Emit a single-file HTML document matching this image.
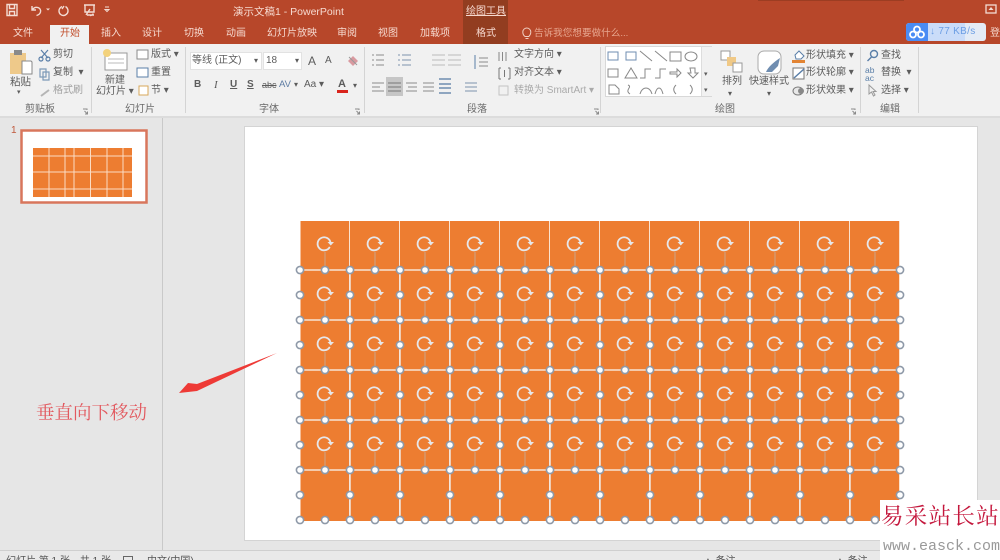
<!DOCTYPE html>
<html lang="zh"><head><meta charset="utf-8"><title>PowerPoint</title>
<style>
html,body{margin:0;padding:0;width:1000px;height:560px;overflow:hidden;background:#e6e6e6}
#p{position:absolute;left:0;top:0;width:1000px;height:560px;overflow:hidden;background:#e6e6e6;font-family:"Liberation Sans","Noto Sans CJK SC",sans-serif;color:#5c5c5c;font-size:10px;filter:blur(.35px)}
.t{position:absolute;white-space:nowrap;line-height:14px;height:14px;margin-top:2px}
.w{color:#f6d9cf}
.b{position:absolute}
svg{position:absolute;overflow:visible}
.sep{position:absolute;top:47px;width:1px;height:66px;background:#d4d4d4}
.lab{color:#6a6a6a}
</style></head><body><div id="p">
<div class="b" style="left:0;top:0;width:1000px;height:44px;background:#b7472a"></div>
<div class="b" style="left:463px;top:0;width:45px;height:44px;background:#923d20"></div>
<div class="b" style="left:758px;top:0;width:146px;height:1px;background:#9c3d22"></div>
<div class="b" style="left:50px;top:25px;width:39px;height:20px;background:#f1f1f1"></div>
<div class="b" style="left:0;top:44px;width:1000px;height:72px;background:#f1f1f1"></div>
<div class="b" style="left:0;top:116px;width:1000px;height:2px;background:#dcdcdc"></div>

<svg style="left:0;top:1px" width="130" height="24" fill="none" stroke="#f3dcd3" stroke-width="1.4">
<path d="M7 3.500h10v11H7zM9.500 3.500v4h5v-4M9.500 14.500v-4h5v4"/>
<path d="M32 5v4h4M32.500 8.500c3-4 9-2 8 2.500-.5 2-2 3-4 3.500"/><path d="M46 7.500h4l-2 2z" fill="#f3dcd3" stroke="none"/>
<path d="M64 5l-2 3M62 5.500c-2 1-3 2.500-3 4.500 0 3 2.500 4.500 4.500 4.500s4.500-2 4.500-4.500c0-2-1-3.500-2.500-4.500"/>
<path d="M84 4h11M85 4v7h9V4M90 8l-4 6M87 14h7M90 14.500c2 0 3-1 3-2"/>
<path d="M105 6h4M105 8.500h4l-2 2z" stroke-width="1"/>
</svg>

<div class="t w" style="left:233px;top:3px;font-size:10.500px">演示文稿1 - PowerPoint</div>
<div class="t w" style="left:466px;top:3px;font-size:10px;text-decoration:underline">绘图工具</div>
<svg style="left:985px;top:4px" width="12" height="12"><rect x="1" y="1" width="10" height="8" fill="none" stroke="#f3dcd3" stroke-width="1.300"/><path d="M6 3l2.500 3h-5z" fill="#f3dcd3"/></svg>

<div class="t w" style="left:13px;top:25px">文件</div>
<div class="t" style="left:60px;top:25px;color:#c2512f">开始</div>
<div class="t w" style="left:101px;top:25px">插入</div>
<div class="t w" style="left:142px;top:25px">设计</div>
<div class="t w" style="left:184px;top:25px">切换</div>
<div class="t w" style="left:226px;top:25px">动画</div>
<div class="t w" style="left:267px;top:25px">幻灯片放映</div>
<div class="t w" style="left:337px;top:25px">审阅</div>
<div class="t w" style="left:378px;top:25px">视图</div>
<div class="t w" style="left:420px;top:25px">加载项</div>
<div class="t w" style="left:476px;top:25px">格式</div>
<svg style="left:522px;top:27px" width="10" height="14" fill="none" stroke="#f0cfc2" stroke-width="1"><path d="M3 9.500C1 8 .8 6.500 .8 5a4 4 0 0 1 8 0c0 1.500-.5 3-2 4.500zM3.500 11.500h3"/></svg>
<div class="t" style="left:534px;top:25px;color:#e7a68f;font-size:9.600px">告诉我您想要做什么...</div>

<div class="b" style="left:906px;top:23px;width:80px;height:18px;background:#e4ebf6;border-radius:3px"></div>
<div class="b" style="left:928px;top:23px;width:37px;height:18px;background:#cadcf9"></div>
<div class="b" style="left:906px;top:23px;width:22px;height:18px;background:#4a8cf4;border-radius:3px 0 0 3px"></div>
<svg style="left:909px;top:25px" width="16" height="14" fill="none" stroke="#fff" stroke-width="1.800"><circle cx="8" cy="4.500" r="3"/><circle cx="4" cy="9.500" r="3"/><circle cx="12" cy="9.500" r="3"/></svg>
<div class="t" style="left:930px;top:23px;color:#6c9ee4;font-size:10px;letter-spacing:.3px">↓ 77 KB/s</div>
<div class="t" style="left:990px;top:25px;color:#f6d9cf">登</div>

<div class="sep" style="left:91px"></div><div class="sep" style="left:185px"></div><div class="sep" style="left:364px"></div><div class="sep" style="left:600px"></div><div class="sep" style="left:860px"></div><div class="sep" style="left:918px"></div>

<svg style="left:0;top:0" width="1000" height="120" fill="none" stroke="#8a8a8a"><path d="M83 109h4v1M87.500 114l-3-3M87.500 111.500v2.500h-2.500M355 109h4v1M359.500 114l-3-3M359.500 111.500v2.500h-2.500M594 109h4v1M598.500 114l-3-3M598.500 111.500v2.500h-2.500M851 109h4v1M855.500 114l-3-3M855.500 111.500v2.500h-2.500"/></svg>

<!-- clipboard -->
<svg style="left:8px;top:48px" width="26" height="28"><rect x="2" y="5" width="16" height="21" fill="#eec98a"/><rect x="6" y="2" width="8" height="5" fill="#8a8a8a"/><path d="M14 13h9l1 1v12H14z" fill="#fff" stroke="#888"/></svg>
<div class="t" style="left:10px;top:73px;font-size:10.500px">粘贴</div>
<div class="t" style="left:17px;top:84px;font-size:7px">▾</div>
<svg style="left:38px;top:48px" width="14" height="50" fill="none" stroke="#5a7fa8" stroke-width="1.200"><path d="M3 2l7 8M10 2l-7 8"/><circle cx="3" cy="11" r="2"/><circle cx="10" cy="11" r="2"/><path d="M2 21h6v8H2zM5 24h6v8H5z" stroke="#7d9ab8"/><path d="M3 48l8-6" stroke="#b5b5b5" stroke-width="2"/></svg>
<div class="t" style="left:53px;top:46px">剪切</div><div class="t" style="left:53px;top:64px">复制 &nbsp;▾</div><div class="t" style="left:53px;top:82px;color:#a0a0a0">格式刷</div>
<div class="t lab" style="left:25px;top:101px">剪贴板</div>
<!-- slides -->
<svg style="left:102px;top:48px" width="26" height="26"><rect x="3" y="5" width="22" height="17" fill="#fff" stroke="#999"/><path d="M6 11h16M6 15h16" stroke="#bbb"/><circle cx="5" cy="5" r="4" fill="#f3d27c"/></svg>
<div class="t" style="left:105px;top:72px">新建</div><div class="t" style="left:96px;top:83px">幻灯片 ▾</div>
<svg style="left:136px;top:49px" width="16" height="50" fill="none" stroke="#8a8a8a"><rect x="1" y="1" width="11" height="9" fill="#fff"/><rect x="1" y="19" width="11" height="9" fill="#fff" stroke="#5a7fa8"/><rect x="3" y="37" width="9" height="9" fill="#fff" stroke="#d8a85a"/></svg>
<div class="t" style="left:151px;top:46px">版式 ▾</div><div class="t" style="left:151px;top:64px">重置</div><div class="t" style="left:151px;top:82px">节 ▾</div>
<div class="t lab" style="left:125px;top:101px">幻灯片</div>
<!-- font -->
<div class="b" style="left:190px;top:52px;width:72px;height:18px;background:#fff;border:1px solid #e2e2e2;box-sizing:border-box"></div>
<div class="b" style="left:263px;top:52px;width:39px;height:18px;background:#fff;border:1px solid #e2e2e2;box-sizing:border-box"></div>
<div class="t" style="left:192px;top:52px">等线 (正文)</div><div class="t" style="left:254px;top:52px;font-size:8px">▾</div>
<div class="t" style="left:266px;top:52px">18</div><div class="t" style="left:295px;top:52px;font-size:8px">▾</div>
<div class="t" style="left:308px;top:52px;font-size:12px">A</div><div class="t" style="left:325px;top:52px;font-size:10px">A</div>
<div class="t" style="left:194px;top:76px;font-weight:bold;font-size:10px">B</div>
<div class="t" style="left:214px;top:76px;font-style:italic;font-family:'Liberation Serif',serif;font-size:11px">I</div>
<div class="t" style="left:230px;top:76px;font-weight:bold;text-decoration:underline">U</div>
<div class="t" style="left:247px;top:76px;font-weight:bold;text-decoration:underline">S</div>
<div class="t" style="left:262px;top:76px;font-size:9px;text-decoration:line-through">abc</div>
<div class="t" style="left:279px;top:76px;font-size:9.500px;color:#5d7ca3">AV</div>
<div class="t" style="left:294px;top:76px;font-size:8px">▾</div>
<div class="t" style="left:304px;top:76px">Aa ▾</div>
<div class="t" style="left:338px;top:75px;font-weight:bold;font-size:11px">A</div>
<div class="b" style="left:337px;top:90px;width:11px;height:3px;background:#d9241c"></div>
<div class="t" style="left:353px;top:77px;font-size:8px">▾</div>
<svg style="left:346px;top:54px" width="14" height="14"><path d="M2 7l5-5 5 5-5 5z" fill="#d99aa0"/><path d="M3 3l8 8" stroke="#999"/></svg>
<div class="t lab" style="left:259px;top:101px">字体</div>
<!-- paragraph -->
<svg style="left:370px;top:52px" width="125" height="46" fill="none" stroke="#8a8a8a">
<path d="M6 3h8M6 8h8M6 13h8M2 3h2M2 8h2M2 13h2"/><path d="M32 3h9M32 8h9M32 13h9M28 3h2M28 8h2M28 13h2" stroke="#7d93ad"/>
<path d="M62 3h13M62 8h13M62 13h13M78 3h13M78 8h13M78 13h13" stroke="#bbb"/>
<path d="M2 31h12M2 35h8M2 39h12M36 31h11M38 35h9M36 39h11M53 31h11M53 35h11M53 39h11"/>
<rect x="16" y="25" width="17" height="19" fill="#c6c6c6" stroke="none"/><path d="M18 31h13M18 35h13M18 39h13" stroke="#777"/>
<path d="M69 27h12M69 32h12M69 36h12M69 41h12" stroke="#6f8db0" stroke-width="1.500"/>
<path d="M95 31h12M95 35h12M95 39h12" stroke="#7d93ad"/>
<path d="M109 6h9M109 10h9M109 14h9"/><path d="M105 3v14" stroke="#5a7fa8"/>
</svg>
<svg style="left:498px;top:48px" width="14" height="50" fill="none" stroke="#777"><path d="M1 4v9M4.500 4v9M8 4v9" stroke="#888"/><path d="M1 20h2M1 31h2M10 20h2M10 31h2M1 20v11M12 20v11M6.500 22v7" stroke="#777"/><rect x="1" y="38" width="9" height="9" stroke="#c4c4c4"/></svg>
<div class="t" style="left:514px;top:46px">文字方向 ▾</div><div class="t" style="left:514px;top:64px">对齐文本 ▾</div>
<div class="t" style="left:514px;top:82px;color:#aaa">转换为 SmartArt ▾</div>
<div class="t lab" style="left:467px;top:101px">段落</div>
<!-- gallery -->
<div class="b" style="left:605px;top:46px;width:107px;height:51px;background:#fff;border:1px solid #d8d8d8;box-sizing:border-box"></div>
<div class="b" style="left:701px;top:47px;width:10px;height:49px;background:#f1f1f1;border-left:1px solid #ddd"></div>
<svg style="left:606px;top:49px" width="105" height="48" fill="none" stroke="#888"><rect x="2" y="3" width="10" height="8" stroke="#6f8db0"/><rect x="20" y="3" width="10" height="8" stroke="#6f8db0"/><path d="M34 2l12 10M49 2l12 10M2 28V20h10v8H2zM19 29l6-10 6 10zM34 29h5v-9h6M49 29h5v-9h6M64 23h7v-3l4 4-4 4v-3h-7zM84 19h5v5h3l-5 5-5-5h3zM3 45v-9h6l4 4v5zM22 36c5 2-4 5 2 9M34 45c2-8 10-8 12 0M49 45c2-8 6-8 8 0M70 36c-3 3-3 6 0 9M84 36c3 3 3 6 0 9"/><rect x="64" y="3" width="11" height="9"/><ellipse cx="85" cy="7.500" rx="6" ry="4.500"/><path d="M98 50" /></svg>
<div class="t" style="left:704px;top:66px;font-size:7px">▾</div><div class="t" style="left:704px;top:82px;font-size:7px">▾</div>
<!-- arrange -->
<svg style="left:720px;top:50px" width="24" height="24"><rect x="1" y="1" width="9" height="9" fill="#fff" stroke="#999"/><rect x="7" y="7" width="9" height="9" fill="#f0c987"/><rect x="13" y="13" width="9" height="9" fill="#fff" stroke="#999"/></svg>
<div class="t" style="left:722px;top:73px">排列</div><div class="t" style="left:728px;top:85px;font-size:8px">▾</div>
<svg style="left:757px;top:50px" width="26" height="25"><rect x="1" y="1" width="23" height="23" rx="6" fill="#fff" stroke="#aaa"/><path d="M9 22c2-5 8-10 14-14l-2 8-6 6z" fill="#6f8db0"/></svg>
<div class="t" style="left:749px;top:73px">快速样式</div><div class="t" style="left:767px;top:85px;font-size:8px">▾</div>
<svg style="left:791px;top:48px" width="16" height="50" fill="none" stroke="#777"><path d="M4 7l4-4 5 5-3 3H5z" fill="#fff" stroke="#5a7fa8"/><rect x="1" y="12" width="13" height="3" fill="#e28433" stroke="none"/><rect x="2" y="20" width="11" height="11" fill="#fff"/><path d="M3 30l10-9" stroke="#5a7fa8" stroke-width="1.500"/><ellipse cx="7" cy="43" rx="5" ry="4" fill="#e8e8e8"/><circle cx="10" cy="43" r="3" fill="#888" stroke="none"/></svg>
<div class="t" style="left:806px;top:47px">形状填充 ▾</div><div class="t" style="left:806px;top:64px">形状轮廓 ▾</div><div class="t" style="left:806px;top:82px">形状效果 ▾</div>
<div class="t lab" style="left:715px;top:101px">绘图</div>
<!-- edit -->
<svg style="left:866px;top:49px" width="14" height="48" fill="none" stroke="#5a7fa8" stroke-width="1.400"><circle cx="8" cy="5" r="3.500"/><path d="M5.500 8L1.500 12"/><path d="M3 36v9l2.500-2 2 4 1.500-1-2-3.500h3z" stroke="#999" stroke-width="1"/></svg>
<div class="t" style="left:865px;top:64px;color:#5a7fa8;font-size:8.500px;line-height:8px">ab<br>ac</div>
<div class="t" style="left:881px;top:47px">查找</div><div class="t" style="left:881px;top:64px">替换 &nbsp;▾</div><div class="t" style="left:881px;top:82px">选择 ▾</div>
<div class="t lab" style="left:880px;top:101px">编辑</div>

<!-- panes -->
<div class="b" style="left:162px;top:118px;width:1px;height:432px;background:#c9c9c9"></div>
<div class="b" style="left:0;top:550px;width:1000px;height:1px;background:#cfcfcf"></div>
<div class="b" style="left:0;top:551px;width:1000px;height:9px;background:#e9e9e9"></div>
<div class="t" style="left:11px;top:122px;color:#c0593c;font-size:10px">1</div>
<svg style="left:20px;top:129px" width="128" height="75">
<rect x="1.500" y="1.500" width="125" height="72" fill="#fff" stroke="#d8765c" stroke-width="2.500"/>
<rect x="13" y="19" width="99" height="49" fill="#ed7d31"/>
<path d="M29 19v49M45 19v49M54 19v49M70.500 19v49M87 19v49M103 19v49M13 27h99M13 43h99M13 60h99" stroke="#fbdcc4" stroke-width="1"/>
</svg>
<!-- slide -->
<div class="b" style="left:245px;top:127px;width:732px;height:413px;background:#fff;box-shadow:0 0 0 1px #d4d4d4"></div>

<svg style="left:0;top:0" width="1000" height="560">
<defs>
<pattern id="tile" patternUnits="userSpaceOnUse" x="300" y="220" width="50" height="50"><rect width="50" height="50" fill="#ed7d31"/><rect x="49" width="2" height="50" fill="#fbe3cf"/></pattern>
<pattern id="rot" patternUnits="userSpaceOnUse" x="300" y="218" width="50" height="50"><path d="M30.500 24.700a6.500 6.500 0 1 0-.7 4.200" fill="none" stroke="#e6e7ea" stroke-width="1.800"/><path d="M27.500 24h6.500l-3.200 3.500z" fill="#e6e7ea"/><path d="M25 34v16" stroke="#c9a58c" stroke-width="1"/></pattern>
<pattern id="h1" patternUnits="userSpaceOnUse" x="287.500" y="257.500" width="25" height="50"><circle cx="12.500" cy="12.500" r="3.600" fill="#fff" stroke="#8e99a8" stroke-width="1.600"/></pattern>
<pattern id="h2" patternUnits="userSpaceOnUse" x="287.500" y="282.500" width="50" height="50"><circle cx="12.500" cy="12.500" r="3.600" fill="#fff" stroke="#8e99a8" stroke-width="1.600"/></pattern>
</defs>
<rect x="300.500" y="221" width="599.500" height="300" fill="url(#tile)"/>
<rect x="296" y="218" width="608" height="2.500" fill="#fff"/>
<path d="M300 270H900M300 320H900M300 370H900M300 420H900M300 470H900" stroke="#f7e3d4" stroke-width="1.600"/>
<path d="M350 270V520M400 270V520M450 270V520M500 270V520M550 270V520M600 270V520M650 270V520M700 270V520M750 270V520M800 270V520M850 270V520" stroke="#f2e8e0" stroke-width="1.500"/>
<rect x="300" y="218" width="600" height="250" fill="url(#rot)"/>
<rect x="295" y="265" width="610" height="260" fill="url(#h1)"/>
<rect x="295" y="290" width="610" height="210" fill="url(#h2)"/>
<path d="M277 353L197 384L188 383L179 393L197 391Z" fill="#ee3a36"/>
</svg>
<div class="t" style="left:36px;top:400px;height:24px;line-height:24px;font-family:'Liberation Serif','Noto Serif CJK SC',serif;font-size:18.500px;color:#e2595f">垂直向下移动</div>

<!-- status -->
<div class="t" style="left:6px;top:553px;color:#555">幻灯片 第 1 张，共 1 张</div>
<svg style="left:123px;top:556px" width="12" height="8" fill="none" stroke="#666"><rect x=".5" y=".5" width="9" height="9"/></svg>
<div class="t" style="left:147px;top:553px;color:#555">中文(中国)</div>
<div class="t" style="left:703px;top:553px;color:#555">▲ 备注</div>
<div class="t" style="left:835px;top:553px;color:#555">▲ 备注</div>

<!-- watermark -->
<div class="b" style="left:880px;top:500px;width:120px;height:60px;background:#fff"></div>
<div class="t" style="left:881px;top:501px;height:28px;line-height:28px;font-family:'Liberation Serif','Noto Serif CJK SC',serif;font-size:22.500px;letter-spacing:1.300px;color:#c4173c">易采站长站</div>
<div class="t" style="left:883px;top:536px;height:17px;line-height:17px;font-family:'Liberation Mono',monospace;font-size:15px;color:#999">www.easck.com</div>
</div></body></html>
